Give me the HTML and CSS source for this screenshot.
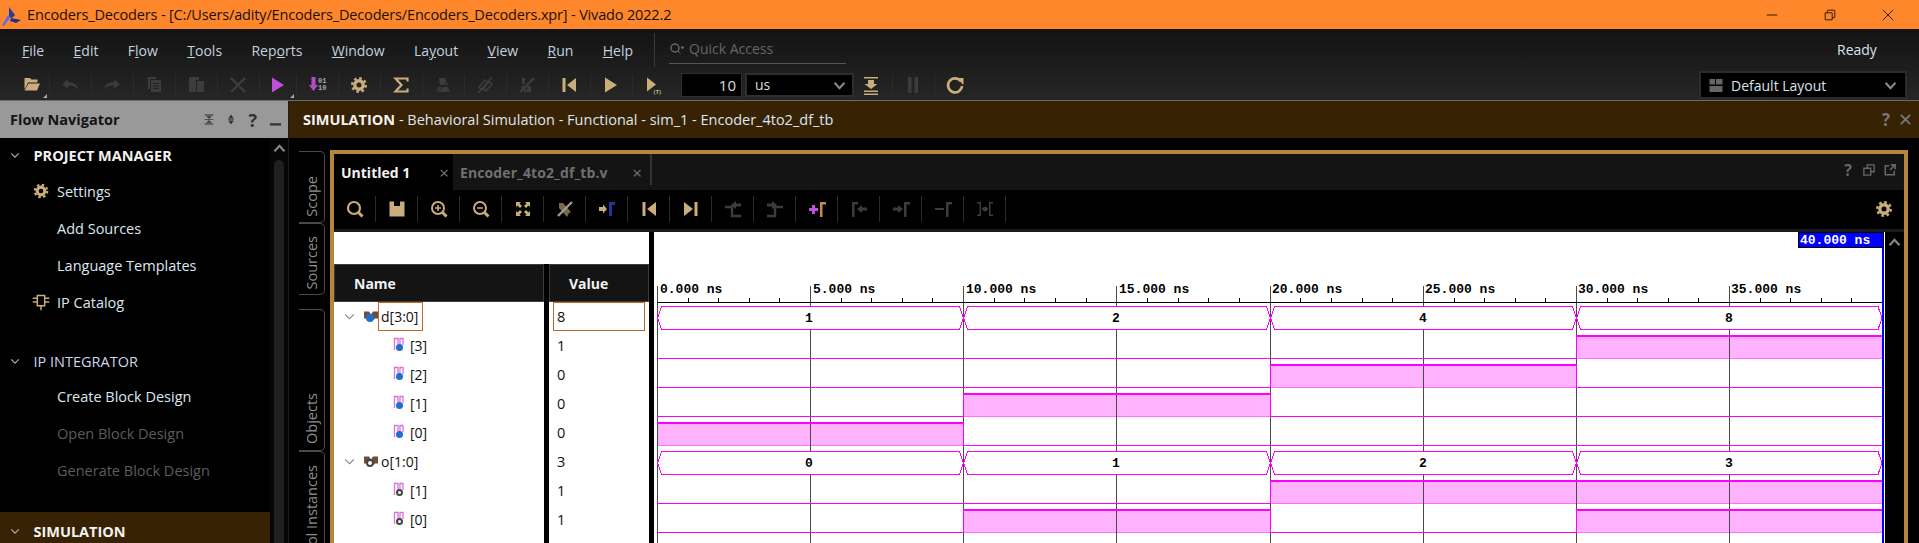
FILE: index.html
```html
<!DOCTYPE html>
<html lang="en">
<head>
    <meta charset="UTF-8">
    <title>Encoders_Decoders - Vivado 2022.2</title>
    <link rel="stylesheet" href="styles.css">
</head>
<body>
    <!-- icon sprite -->
    <svg class="sprite" xmlns="http://www.w3.org/2000/svg">
        <symbol id="i-folder" viewBox="0 0 24 24"><path d="M4.500 5h5.500l1.500 1.500h6V9.500H8L5.500 15 4.500 16z"/><path d="M8.500 10.500H20L17 17.500H4.500z"/></symbol>
        <symbol id="i-undo" viewBox="0 0 24 24"><path d="M4 11.500l6-5v3c5 0 9 1 10 7-2-3-5-4-10-4v3z"/></symbol>
        <symbol id="i-redo" viewBox="0 0 24 24"><path d="M20 11.500l-6-5v3c-5 0-9 1-10 7 2-3 5-4 10-4v3z"/></symbol>
        <symbol id="i-copy" viewBox="0 0 24 24"><path d="M6 4h8v2H8v10H6z"/><path fill-rule="evenodd" d="M9 7h10v12H9zM11 10v1h6v-1zM11 12.500v1h6v-1zM11 15v1h6v-1z"/></symbol>
        <symbol id="i-paste" viewBox="0 0 24 24"><path d="M5 4h10v3h-3v12H5z"/><path d="M13 8h7v11h-7z"/></symbol>
        <symbol id="i-x" viewBox="0 0 24 24"><path d="M5 5l14 14M19 5L5 19" fill="none" stroke="currentColor" stroke-width="2.400"/></symbol>
        <symbol id="i-play" viewBox="0 0 24 24"><path d="M6 4.500l12 7.500-12 7.500z"/></symbol>
        <symbol id="i-run" viewBox="0 0 24 24"><path fill="#b44cc0" d="M6.500 4h4v8h2.500l-4.500 6-4.500-6h2.500z"/><text x="13" y="10" class="bits">01</text><text x="13" y="16.500" class="bits">10</text></symbol>
        <symbol id="i-gear" viewBox="0 0 24 24"><circle cx="12" cy="12" r="4.200" fill="none" stroke="currentColor" stroke-width="3.400"/><circle cx="12" cy="12" r="6.800" fill="none" stroke="currentColor" stroke-width="2.400" stroke-dasharray="2.670 2.670"/></symbol>
        <symbol id="i-sigma" viewBox="0 0 24 24"><path d="M18.500 8.500V5.500H6.500l6 6.500-6 6.500h12v-3" fill="none" stroke="currentColor" stroke-width="2.200"/></symbol>
        <symbol id="i-tri" viewBox="0 0 24 24"><path d="M5.500 19l1.500-5h10l1.500 5zM8 5h6l3 7H9z"/><path d="M6 20L19 5" fill="none" stroke="#222" stroke-width="1"/></symbol>
        <symbol id="i-chain" viewBox="0 0 24 24"><path d="M6 14l6-7 3 3-6 7zM10 15l6-7 3 3-6 7zM5 20L19 4" fill="none" stroke="currentColor" stroke-width="1.600"/></symbol>
        <symbol id="i-slash" viewBox="0 0 24 24"><path d="M7 5h3v6H7zM12 13h4v6h-4z"/><path d="M5 19L19 5M7 13l4 6" fill="none" stroke="currentColor" stroke-width="2.400"/></symbol>
        <symbol id="i-first" viewBox="0 0 24 24"><path d="M5.500 5h3v14h-3zM19 5v14l-9-7z"/></symbol>
        <symbol id="i-last" viewBox="0 0 24 24"><path d="M15.500 5h3v14h-3zM5 5v14l9-7z"/></symbol>
        <symbol id="i-playt" viewBox="0 0 24 24"><path d="M6 4.500l9 7-9 7z"/><text x="12.500" y="21" class="tiny">(T)</text></symbol>
        <symbol id="i-down" viewBox="0 0 24 24"><path d="M5 4h14v1.500H5zM9 7h6v4h3.500L12 16l-6.500-5H9zM5 17.500h14V19H5zM5 20.500h14V22H5z"/></symbol>
        <symbol id="i-pause" viewBox="0 0 24 24"><path d="M7 4h3.500v16H7zM13.500 4H17v16h-3.500z"/></symbol>
        <symbol id="i-redo2" viewBox="0 0 24 24"><path d="M17.500 8a7 7 0 1 0 1.500 5" fill="none" stroke="currentColor" stroke-width="2.600"/><path d="M13.500 5h7v7z"/></symbol>
        <symbol id="i-search" viewBox="0 0 24 24"><circle cx="11" cy="11" r="6" fill="none" stroke="currentColor" stroke-width="2.200"/><path d="M15 15l4.500 4.500" stroke="currentColor" stroke-width="3"/></symbol>
        <symbol id="i-save" viewBox="0 0 24 24"><path fill-rule="evenodd" d="M4.500 4.500h15v15h-15zM9 4.500v4.500h6V4.500z"/></symbol>
        <symbol id="i-zoomin" viewBox="0 0 24 24"><circle cx="11" cy="11" r="6" fill="none" stroke="currentColor" stroke-width="2"/><path d="M15 15l4.500 4.500" stroke="currentColor" stroke-width="3"/><path d="M8 11h6M11 8v6" stroke="currentColor" stroke-width="1.500"/></symbol>
        <symbol id="i-zoomout" viewBox="0 0 24 24"><circle cx="11" cy="11" r="6" fill="none" stroke="currentColor" stroke-width="2"/><path d="M15 15l4.500 4.500" stroke="currentColor" stroke-width="3"/><path d="M8 11h6" stroke="currentColor" stroke-width="1.500"/></symbol>
        <symbol id="i-fit" viewBox="0 0 24 24"><path d="M5 5h5l-1.500 1.500L11 9l-2 2-2.500-2.500L5 10zM19 5v5l-1.500-1.500L15 11l-2-2 2.500-2.500L14 5zM5 19v-5l1.500 1.500L9 13l2 2-2.500 2.500L10 19zM19 19h-5l1.500-1.500L13 15l2-2 2.500 2.500L19 14z"/></symbol>
        <symbol id="i-cut" viewBox="0 0 24 24"><path d="M6 6h4l8 9-2 1-2 4-8-9z" fill="#c9ad7a" opacity=".6"/><path d="M5 19L19 5" stroke="#999" stroke-width="2.400"/></symbol>
        <symbol id="i-marknext" viewBox="0 0 24 24"><path d="M4 10h4V7.500l4 4.500-4 4.500V14H4z"/><path d="M14 19V5h6v3h-3v11z" fill="#20369c"/></symbol>
        <symbol id="i-edgel" viewBox="0 0 24 24"><path d="M4 10h7v9h9" fill="none" stroke="currentColor" stroke-width="2.400"/><path d="M10 8l5-4v2.500h5v3h-5V12z"/></symbol>
        <symbol id="i-edger" viewBox="0 0 24 24"><path d="M4 19h8v-9h8" fill="none" stroke="currentColor" stroke-width="2.400"/><path d="M4 6.500h5V4l5 4-5 4V9.500H4z"/></symbol>
        <symbol id="i-add" viewBox="0 0 24 24"><path d="M4 11h3V8h3v3h3v3h-3v3H7v-3H4z" fill="#c050d8"/><path d="M15 20V5h6v2.500h-3.500V20z" fill="#c98552"/></symbol>
        <symbol id="i-gamma-l" viewBox="0 0 24 24"><path d="M5 20V5h6v2.500H7.500V20z"/><path d="M10 12l5-4v2.500h5v3h-5V16z"/></symbol>
        <symbol id="i-gamma-r" viewBox="0 0 24 24"><path d="M4 10.500h5V8l5 4-5 4v-2.500H4z"/><path d="M15 20V5h6v2.500h-3.500V20z"/></symbol>
        <symbol id="i-gamma-d" viewBox="0 0 24 24"><path d="M4 11h9v2H4z"/><path d="M15 20V5h6v2.500h-3.500V20z"/></symbol>
        <symbol id="i-span" viewBox="0 0 24 24"><path d="M4 5h4v14H4v-1.500h2.500v-11H4zM20 5h-4v14h4v-1.500h-2.500v-11H20z"/><path d="M9 12h6M9 12l2.500-2v4zM15 12l-2.500-2v4z" stroke="currentColor"/></symbol>
        <symbol id="i-bus" viewBox="0 0 14 16"><path fill="#6e4c3c" d="M0 3.500h5l2 3 2-3h5v7h-3l-1 1H4l-1-1H0z"/></symbol>
        <symbol id="i-bit" viewBox="0 0 14 16"><path d="M1.500 13V1.500H5V11M7 11V1.500h3V8" fill="none" stroke="#d873d8" stroke-width="1.300"/></symbol>
    </svg>

    <div class="app">
        <div class="titlebar">
            <svg class="logo" viewBox="0 0 24 24"><path fill="#2d3a9c" d="M9 4l6 8-3 3-3-1z"/><path fill="#6a6ae0" d="M8 12l2 3-6 8-2-1z"/><path fill="#23308c" d="M11 15l10 2-5 3-6-2z"/></svg>
            <span class="title">Encoders_Decoders - [C:/Users/adity/Encoders_Decoders/Encoders_Decoders.xpr] - Vivado 2022.2</span>
            <div class="winbtns">
                <svg viewBox="0 0 16 16"><path d="M2 8h12" stroke="#1a1008" fill="none"/></svg>
                <svg viewBox="0 0 16 16"><path d="M2.500 5.500h8v8h-8zM5 5.500V3a.5.500 0 0 1 .5-.5h7.500a.5.500 0 0 1 .5.500v7.500a.5.500 0 0 1-.5.500h-2.500" stroke="#1a1008" fill="none"/></svg>
                <svg viewBox="0 0 16 16"><path d="M2 2l12 12M14 2L2 14" stroke="#1a1008" fill="none"/></svg>
            </div>
        </div>

        <div class="topbar">
            <div class="menus">
                <nav class="menu">
                    <a><u>F</u>ile</a><a><u>E</u>dit</a><a>F<u>l</u>ow</a><a><u>T</u>ools</a><a>Rep<u>o</u>rts</a><a><u>W</u>indow</a><a>La<u>y</u>out</a><a><u>V</u>iew</a><a><u>R</u>un</a><a><u>H</u>elp</a>
                </nav>
                <div class="quick">
                    <svg class="q-icon" viewBox="0 0 16 16"><circle cx="6" cy="7" r="4" fill="none" stroke="#666" stroke-width="1.500"/><path d="M9 10l2.500 2.500M12 6h3l-1.500 2z" stroke="#666" fill="#666"/></svg>
                    <span>Quick Access</span>
                </div>
                <span class="ready">Ready</span>
            </div>
            <div class="tools">
                <span class="tb tb-first on corner"><svg><use href="#i-folder"/></svg></span>
                <span class="tb off"><svg><use href="#i-undo"/></svg></span>
                <span class="tb off"><svg><use href="#i-redo"/></svg></span>
                <span class="tb off"><svg><use href="#i-copy"/></svg></span>
                <span class="tb off"><svg><use href="#i-paste"/></svg></span>
                <span class="tb off"><svg><use href="#i-x"/></svg></span>
                <span class="tb tb-run purple corner"><svg><use href="#i-play"/></svg></span>
                <span class="tb bits-on"><svg><use href="#i-run"/></svg></span>
                <span class="tb on"><svg><use href="#i-gear"/></svg></span>
                <span class="tb on"><svg><use href="#i-sigma"/></svg></span>
                <span class="tb off"><svg><use href="#i-tri"/></svg></span>
                <span class="tb off"><svg><use href="#i-chain"/></svg></span>
                <span class="tb off"><svg><use href="#i-slash"/></svg></span>
                <span class="tb on"><svg><use href="#i-first"/></svg></span>
                <span class="tb on"><svg><use href="#i-play"/></svg></span>
                <span class="tb on"><svg><use href="#i-playt"/></svg></span>
                <span class="run-input">10</span>
                <span class="run-unit">us<svg class="chev" viewBox="0 0 14 10"><path d="M1.500 2L7 8l5.500-6" fill="none" stroke="#888" stroke-width="2.400"/></svg></span>
                <span class="tb tb-narrow on"><svg><use href="#i-down"/></svg></span>
                <span class="tb off"><svg><use href="#i-pause"/></svg></span>
                <span class="tb on"><svg><use href="#i-redo2"/></svg></span>
                <span class="layout-pick">
                    <svg class="lay-icon" viewBox="0 0 14 14"><path fill="#666" d="M0 0h6v6H0zM7 0h7v6H7zM0 7.500h14V14H0z"/></svg>
                    <span>Default Layout</span>
                    <svg class="chev" viewBox="0 0 14 10"><path d="M1.500 2L7 8l5.500-6" fill="none" stroke="#888" stroke-width="2.400"/></svg>
                </span>
            </div>
        </div>

        <div class="main">
            <aside class="flow">
                <div class="flow-head">
                    <strong>Flow Navigator</strong>
                    <div class="flow-btns">
                        <svg viewBox="0 0 14 14"><path fill="#333" d="M1 0h12v1.500H1zM1 12.500h12V14H1zM7 6L3 2.500h8zM7 8l4 3.500H3z"/><path d="M1 6.500h12v1H1z" fill="#333"/></svg>
                        <svg viewBox="0 0 14 14"><path fill="#333" d="M7 0l4 5.500H3zM7 14l-4-5.500h8z"/><path d="M3 6.500h8v1H3z" fill="#333"/></svg>
                        <b>?</b>
                        <svg viewBox="0 0 14 14"><path fill="#333" d="M1 11h12v2.500H1z"/></svg>
                    </div>
                </div>
                <div class="flow-body">
                    <div class="flow-list">
                        <div class="sec"><svg class="twist" viewBox="0 0 12 8"><path d="M1.500 1.500L6 6l4.500-4.500" fill="none" stroke="#aaa" stroke-width="1.500"/></svg><b>PROJECT MANAGER</b></div>
                        <div class="item"><svg class="item-ic on"><use href="#i-gear"/></svg>Settings</div>
                        <div class="item">Add Sources</div>
                        <div class="item">Language Templates</div>
                        <div class="item"><svg class="item-ic on" viewBox="0 0 24 24"><path d="M8 5h8v11H8zM12 16v5M3 8h5M3 12h5M16 8h5M16 12h5" fill="none" stroke="currentColor" stroke-width="1.600"/></svg>IP Catalog</div>
                        <div class="sec sec-gap"><svg class="twist" viewBox="0 0 12 8"><path d="M1.500 1.500L6 6l4.500-4.500" fill="none" stroke="#aaa" stroke-width="1.500"/></svg>IP INTEGRATOR</div>
                        <div class="item">Create Block Design</div>
                        <div class="item dim">Open Block Design</div>
                        <div class="item dim">Generate Block Design</div>
                        <div class="sec sec-sim"><svg class="twist" viewBox="0 0 12 8"><path d="M1.500 1.500L6 6l4.500-4.500" fill="none" stroke="#aaa" stroke-width="1.500"/></svg><b>SIMULATION</b></div>
                    </div>
                    <div class="flow-scroll">
                        <svg class="up" viewBox="0 0 14 10"><path d="M1.500 8L7 2l5.500 6" fill="none" stroke="#888" stroke-width="2.400"/></svg>
                        <div class="thumb"></div>
                    </div>
                </div>
            </aside>

            <section class="sim">
                <div class="sim-head">
                    <span><b>SIMULATION</b> - Behavioral Simulation - Functional - sim_1 - Encoder_4to2_df_tb</span>
                    <div class="sim-btns"><b>?</b><svg viewBox="0 0 14 14"><path d="M2 2l10 10M12 2L2 12" stroke="#777" stroke-width="2" fill="none"/></svg></div>
                </div>
                <div class="sim-body">
                    <div class="side-tabs">
                        <div class="vtab vtab-scope"><span>Scope</span></div>
                        <div class="vtab vtab-sources"><span>Sources</span></div>
                        <div class="vtab vtab-objects"><span>Objects</span></div>
                        <div class="vtab vtab-inst"><span>Tool Instances</span></div>
                    </div>
                    <div class="panel">
                        <div class="tabbar">
                            <div class="tab active">Untitled 1<i>×</i></div>
                            <div class="tab">Encoder_4to2_df_tb.v<i>×</i></div>
                            <div class="tab-end"></div>
                            <div class="tab-btns">
                                <b>?</b>
                                <svg viewBox="0 0 14 14"><path d="M1 5h8v8H1zM5 5V1h8v8H9" fill="none" stroke="#666" stroke-width="1.600"/></svg>
                                <svg viewBox="0 0 14 14"><path d="M6 2H1.500v10.500H12V8M8 1h5v5M13 1L7 7" fill="none" stroke="#666" stroke-width="1.800"/></svg>
                            </div>
                        </div>
                        <div class="wavebar">
                            <span class="wb on"><svg><use href="#i-search"/></svg></span>
                            <span class="wb on"><svg><use href="#i-save"/></svg></span>
                            <span class="wb on"><svg><use href="#i-zoomin"/></svg></span>
                            <span class="wb on"><svg><use href="#i-zoomout"/></svg></span>
                            <span class="wb on"><svg><use href="#i-fit"/></svg></span>
                            <span class="wb"><svg><use href="#i-cut"/></svg></span>
                            <span class="wb on"><svg><use href="#i-marknext"/></svg></span>
                            <span class="wb on"><svg><use href="#i-first"/></svg></span>
                            <span class="wb on"><svg><use href="#i-last"/></svg></span>
                            <span class="wb off"><svg><use href="#i-edgel"/></svg></span>
                            <span class="wb off"><svg><use href="#i-edger"/></svg></span>
                            <span class="wb"><svg><use href="#i-add"/></svg></span>
                            <span class="wb off"><svg><use href="#i-gamma-l"/></svg></span>
                            <span class="wb off"><svg><use href="#i-gamma-r"/></svg></span>
                            <span class="wb off"><svg><use href="#i-gamma-d"/></svg></span>
                            <span class="wb off"><svg><use href="#i-span"/></svg></span>
                            <span class="wb-gear on"><svg><use href="#i-gear"/></svg></span>
                        </div>
                        <div class="wave-cfg">
                            <div class="signals">
                                <div class="sig-blank"></div>
                                <div class="sig-cols">
                                    <div class="col-name">
                                        <div class="col-head">Name</div>
                                        <div class="row"><svg class="twist" viewBox="0 0 12 8"><path d="M1 1.500L6 6.500l5-5" fill="none" stroke="#888" stroke-width="1.300"/></svg><span class="ic-wrap"><svg class="sig-ic"><use href="#i-bus"/></svg><em class="dot blue"></em></span><span class="sel">d[3:0]</span></div>
                                        <div class="row child"><span class="ic-wrap"><svg class="sig-ic"><use href="#i-bit"/></svg><em class="dot blue small"></em></span>[3]</div>
                                        <div class="row child"><span class="ic-wrap"><svg class="sig-ic"><use href="#i-bit"/></svg><em class="dot blue small"></em></span>[2]</div>
                                        <div class="row child"><span class="ic-wrap"><svg class="sig-ic"><use href="#i-bit"/></svg><em class="dot blue small"></em></span>[1]</div>
                                        <div class="row child"><span class="ic-wrap"><svg class="sig-ic"><use href="#i-bit"/></svg><em class="dot blue small"></em></span>[0]</div>
                                        <div class="row"><svg class="twist" viewBox="0 0 12 8"><path d="M1 1.500L6 6.500l5-5" fill="none" stroke="#888" stroke-width="1.300"/></svg><span class="ic-wrap"><svg class="sig-ic"><use href="#i-bus"/></svg><em class="dot grey"></em></span>o[1:0]</div>
                                        <div class="row child"><span class="ic-wrap"><svg class="sig-ic"><use href="#i-bit"/></svg><em class="dot grey small"></em></span>[1]</div>
                                        <div class="row child"><span class="ic-wrap"><svg class="sig-ic"><use href="#i-bit"/></svg><em class="dot grey small"></em></span>[0]</div>
                                    </div>
                                    <div class="col-val">
                                        <div class="col-head">Value</div>
                                        <div class="row"><span class="val-sel">8</span></div>
                                        <div class="row">1</div>
                                        <div class="row">0</div>
                                        <div class="row">0</div>
                                        <div class="row">0</div>
                                        <div class="row">3</div>
                                        <div class="row">1</div>
                                        <div class="row">1</div>
                                    </div>
                                </div>
                            </div>

                            <svg class="plot" viewBox="654 232 1231 311" shape-rendering="crispEdges">
                                <!-- high levels -->
                                <path class="hi" d="M1576 335h306v23h-306zM1270 364h306v23h-306zM963 393h307v23H963zM657 422h306v23H657zM1270 480h612v23h-612zM963 509h307v23H963zM1576 509h306v23h-306z"/>
                                <path class="hi-foot" d="M1576 358.500h306M1270 387.500h306M963 416.500h307M657 445.500h306M1270 503.500h612M963 532.500h307M1576 532.500h306"/>
                                <!-- time grid -->
                                <path class="grid" d="M657.500 286V543M810.500 286V543M963.500 286V543M1116.500 286V543M1270.500 286V543M1423.500 286V543M1576.500 286V543M1729.500 286V543"/>
                                <path class="axis" d="M657 302.500H1882M688.500 298v4M718.500 298v4M749.500 298v4M779.500 298v4M841.500 298v4M871.500 298v4M902.500 298v4M932.500 298v4M994.500 298v4M1024.500 298v4M1055.500 298v4M1086.500 298v4M1147.500 298v4M1178.500 298v4M1208.500 298v4M1239.500 298v4M1300.500 298v4M1331.500 298v4M1362.500 298v4M1392.500 298v4M1454.500 298v4M1484.500 298v4M1515.500 298v4M1545.500 298v4M1607.500 298v4M1637.500 298v4M1668.500 298v4M1698.500 298v4M1760.500 298v4M1790.500 298v4M1821.500 298v4M1851.500 298v4"/>
                                <g class="ruler">
                                    <text x="660" y="293">0.000 ns</text>
                                    <text x="813" y="293">5.000 ns</text>
                                    <text x="966" y="293">10.000 ns</text>
                                    <text x="1119" y="293">15.000 ns</text>
                                    <text x="1272" y="293">20.000 ns</text>
                                    <text x="1425" y="293">25.000 ns</text>
                                    <text x="1578" y="293">30.000 ns</text>
                                    <text x="1731" y="293">35.000 ns</text>
                                </g>
                                <!-- scalar traces -->
                                <path class="trace" d="M657 358.500H1576.500V335.500H1882"/>
                                <path class="trace" d="M657 387.500H1270.500V364.500H1576.500V387.500H1882"/>
                                <path class="trace" d="M657 416.500H963.500V393.500H1270.500V416.500H1882"/>
                                <path class="trace" d="M657 422.500H963.500V445.500H1882"/>
                                <path class="trace" d="M657 503.500H1270.500V480.500H1882"/>
                                <path class="trace" d="M657 532.500H963.500V509.500H1270.500V532.500H1576.500V509.500H1882"/>
                                <path class="trace-top" d="M1576 336h306M1270 365h306M963 394h307M657 423h306M1270 481h612M963 510h307M1576 510h306"/>
                                <!-- buses -->
                                <path class="bus" d="M657.500 318L661.500 306.500H959.500L963.500 318L959.500 329.500H661.500Z"/>
                                <path class="bus" d="M963.500 318L967.500 306.500H1266.500L1270.500 318L1266.500 329.500H967.500Z"/>
                                <path class="bus" d="M1270.500 318L1274.500 306.500H1572.500L1576.500 318L1572.500 329.500H1274.500Z"/>
                                <path class="bus" d="M1576.500 318L1580.500 306.500H1878L1882 318L1878 329.500H1580.500Z"/>
                                <path class="bus" d="M657.500 463L661.500 451.500H959.500L963.500 463L959.500 474.500H661.500Z"/>
                                <path class="bus" d="M963.500 463L967.500 451.500H1266.500L1270.500 463L1266.500 474.500H967.500Z"/>
                                <path class="bus" d="M1270.500 463L1274.500 451.500H1572.500L1576.500 463L1572.500 474.500H1274.500Z"/>
                                <path class="bus" d="M1576.500 463L1580.500 451.500H1878L1882 463L1878 474.500H1580.500Z"/>
                                <g class="bus-val">
                                    <text x="809" y="322">1</text><text x="1116" y="322">2</text><text x="1423" y="322">4</text><text x="1729" y="322">8</text>
                                    <text x="809" y="467">0</text><text x="1116" y="467">1</text><text x="1423" y="467">2</text><text x="1729" y="467">3</text>
                                </g>
                                <!-- cursor -->
                                <rect class="cursor" x="1882" y="232" width="2" height="311"/>
                                <rect class="cursor-tag" x="1798.500" y="232.500" width="85" height="15"/>
                                <text class="cursor-text" x="1800" y="244">40.000 ns</text>
                            </svg>
                            <div class="wave-scroll"><svg class="up" viewBox="0 0 14 10"><path d="M1.500 8L7 2l5.500 6" fill="none" stroke="#888" stroke-width="2.400"/></svg></div>
                        </div>
                    </div>
                </div>
            </section>
        </div>
    </div>
</body>
</html>
```

FILE: styles.css
```css
* { box-sizing: border-box; }
html, body { margin: 0; height: 100%; background: #000; overflow: hidden; }
body { font-family: "Open Sans", "Noto Sans", sans-serif; font-size: 14px; color: #e8e8e8; }
.sprite { position: absolute; width: 0; height: 0; }
.tiny { font-size: 6px; font-weight: 700; font-family: "Open Sans", sans-serif; }
.bits { font-size: 7px; font-weight: 700; font-family: "Liberation Mono", monospace; fill: #a8a8a8; }
.app { width: 1919px; height: 543px; display: flex; flex-direction: column; }

.on { color: #c9ad7a; fill: #c9ad7a; }
.off { color: #3c3c3c; fill: #3c3c3c; }
.purple { color: #c050d8; fill: #c050d8; }

/* title bar */
.titlebar { height: 29px; background: #ff872b; display: flex; align-items: center; color: #1a1008; flex: none; }
.logo { width: 24px; height: 24px; margin-right: 3px; flex: none; }
.title { font-size: 14.500px; letter-spacing: -0.160px; white-space: nowrap; }
.winbtns { margin-left: auto; display: flex; gap: 44px; padding-right: 24px; }
.winbtns svg { width: 14px; height: 14px; }

/* menu + main toolbar */
.topbar { height: 72px; background: linear-gradient(#131313, #262626); border-bottom: 1px solid #6a6a6a; flex: none; }
.menus { height: 42px; display: flex; align-items: center; padding-left: 22px; }
.menu { display: flex; gap: 29.400px; width: 632px; flex: none; margin-top: 1px; }
.menu a { color: #c4d0dc; font-size: 14px; }
.quick { height: 34px; width: 192px; border-left: 1px solid #3a3a3a; padding: 0 0 3px 14px; position: relative; display: flex; align-items: center; gap: 4px; color: #666; font-size: 14px; flex: none; }
.quick::after { content: ""; position: absolute; left: 14px; right: 0; bottom: 3px; height: 1px; background: #555; }
.q-icon { width: 16px; height: 16px; }
.ready { margin-left: 991px; margin-bottom: 2px; color: #d8e2ec; font-size: 14px; }
.tools { height: 29px; display: flex; align-items: center; padding: 0 0 1px 14px; }
.tb { width: 42px; height: 28px; display: flex; align-items: center; justify-content: center; position: relative; flex: none; }
.tb svg { width: 24px; height: 24px; }
.tb-first { width: 35px; }
.tb-run { width: 37px; }
.bits-on { fill: #c9ad7a; }
.tb + .tb::before { content: ""; position: absolute; left: 0; top: 3px; bottom: 3px; width: 1px; background: #2b2b2b; }
.corner::after { content: ""; position: absolute; right: 2px; bottom: 1px; border: 2.500px solid transparent; border-right-color: #aaa; border-bottom-color: #aaa; }
.run-input { width: 61px; height: 24px; margin-left: 7px; background: #000; border: 1px solid #2e2e2e; color: #ddd; text-align: right; padding-right: 5px; line-height: 23px; font-size: 15px; }
.run-unit { width: 109px; height: 24px; margin-left: 3px; background: #000; border: 2px solid #2e2e2e; color: #ddd; padding-left: 8px; line-height: 20px; font-size: 14px; display: flex; align-items: center; justify-content: space-between; padding-right: 6px; }
.chev { width: 13px; height: 9px; flex: none; }
.tb-narrow { width: 34px; margin-right: 4px; }
.layout-pick { margin-left: auto; margin-right: 12px; width: 208px; height: 28px; background: #000; border: 2px solid #2b2b2b; display: flex; align-items: center; padding: 0 8px; font-size: 14px; color: #d8e2ec; }
.lay-icon { width: 14px; height: 13px; margin-right: 8px; flex: none; }
.layout-pick .chev { margin-left: auto; }

.main { flex: 1; display: flex; min-height: 0; }

/* flow navigator */
.flow { width: 288px; flex: none; display: flex; flex-direction: column; }
.flow-head { height: 37px; background: #999; display: flex; align-items: center; justify-content: space-between; padding: 0 6px 0 10px; color: #141414; font-size: 14.500px; flex: none; }
.flow-btns { display: flex; align-items: center; gap: 12px; }
.flow-btns svg { width: 10px; height: 13px; }
.flow-btns b { font-size: 18px; color: #333; }
.flow-btns svg:last-child { width: 13px; }
.flow-body { flex: 1; display: flex; min-height: 0; }
.flow-list { width: 270px; flex: none; }
.sec { height: 35px; display: flex; align-items: center; color: #c8d8ea; font-size: 14.500px; padding-left: 10px; }
.sec b { color: #f2f2f2; }
.twist { width: 10px; height: 7px; margin-right: 13.500px; flex: none; }
.sec-gap { margin-top: 23px; height: 34px; }
.sec-sim { margin-top: 23px; height: 32px; background: #382204; padding-top: 6px; }
.item { height: 37px; display: flex; align-items: center; padding-left: 57px; position: relative; font-size: 14.500px; color: #dce6f0; }
.item.dim { color: #5c5c5c; }
.item-ic { position: absolute; left: 30px; top: 7px; width: 22px; height: 22px; }
.flow-scroll { width: 18px; background: #060606; display: flex; flex-direction: column; align-items: center; padding-top: 6px; }
.up { width: 13px; height: 9px; flex: none; }
.thumb { width: 10px; flex: 1; margin-top: 7px; background: #202020; border-radius: 5px 5px 0 0; }

/* simulation dashboard */
.sim { flex: 1; display: flex; flex-direction: column; min-width: 0; border-left: 1px solid #1c1c1c; }
.sim-head { height: 37px; background: #382204; display: flex; align-items: center; justify-content: space-between; padding: 0 7px 0 14px; color: #dce6f0; font-size: 14.500px; flex: none; }
.sim-head b { color: #f2f2f2; }
.sim-btns { display: flex; align-items: center; gap: 9px; }
.sim-btns b { color: #777; font-size: 17px; }
.sim-btns svg { width: 13px; height: 13px; }
.sim-body { flex: 1; display: flex; min-height: 0; padding: 12px 11px 0 10px; }

.side-tabs { width: 31px; flex: none; display: flex; flex-direction: column; margin-top: 1px; overflow: hidden; }
.vtab { width: 26px; border: 1px solid #4a4a4a; border-left: 0; border-radius: 0 5px 5px 0; display: flex; flex: none; justify-content: center; color: #8b8f92; overflow: hidden; }
.vtab span { writing-mode: vertical-rl; transform: rotate(180deg); font-size: 14.500px; white-space: nowrap; line-height: 24px; }
.vtab-scope { height: 72px; align-items: flex-end; padding-bottom: 5px; }
.vtab-sources { height: 72px; align-items: flex-end; padding-bottom: 5px; }
.vtab-objects { height: 142px; margin-top: 14px; align-items: flex-end; padding-bottom: 6px; }
.vtab-inst { height: 120px; align-items: flex-start; padding-top: 13px; }

.panel { flex: 1; border: 4px solid #b5853a; border-bottom: 0; display: flex; flex-direction: column; min-width: 0; background: #000; }
.tabbar { height: 36px; background: #141414; display: flex; flex: none; }
.tab { width: 197px; height: 36px; display: flex; align-items: center; padding-left: 7px; position: relative; font-weight: 700; font-size: 14px; letter-spacing: 0.100px; color: #707070; }
.tab.active { width: 119px; background: #000; color: #f2f2f2; letter-spacing: 0; }
.tab i { position: absolute; right: 8px; top: 7px; font-style: normal; font-weight: 400; font-size: 17px; color: #777; }
.tab.active i { right: 4px; }
.tab-end { width: 2px; height: 31px; background: #333; }
.tab-btns { margin-left: auto; display: flex; align-items: center; gap: 9px; padding: 0 8px 4px 0; color: #666; }
.tab-btns b { font-size: 16px; margin-right: 2px; }
.tab-btns svg { width: 12px; height: 12px; }

.wavebar { height: 39px; display: flex; align-items: center; padding-bottom: 1px; flex: none; }
.wb { width: 42px; height: 26px; display: flex; align-items: center; justify-content: center; border-right: 1px solid #2c2c2c; flex: none; }
.wb svg, .wb-gear svg { width: 24px; height: 24px; }
.wb-gear { margin-left: auto; padding-right: 8px; display: flex; }

.wave-cfg { flex: 1; display: flex; min-height: 0; border-top: 3px solid #1a1a1a; }
.signals { width: 315px; flex: none; display: flex; flex-direction: column; }
.sig-blank { height: 32px; background: #fff; flex: none; }
.sig-cols { flex: 1; display: flex; gap: 5px; min-height: 0; }
.col-name { width: 210px; background: #fff; flex: none; }
.col-val { width: 100px; background: #fff; flex: none; }
.col-head { height: 38px; background: #141414; border: 1px solid #3c3c3c; color: #f2f2f2; font-weight: 700; font-size: 14px; display: flex; align-items: center; padding-left: 19px; }
.row { height: 29px; display: flex; align-items: center; color: #111; font-size: 14px; white-space: nowrap; }
.col-val .row { padding-left: 8px; font-size: 14.500px; }
.col-name .row { padding-left: 10px; }
.col-name .row.child { padding-left: 59px; }
.col-name .twist { margin-right: 9px; width: 11px; }
.ic-wrap { width: 14px; height: 18px; position: relative; display: block; margin-right: 3px; flex: none; }
.sig-ic { width: 14px; height: 16px; display: block; }
.dot { position: absolute; left: 2px; top: 6px; width: 8px; height: 8px; border-radius: 50%; }
.dot.small { left: 3px; top: 7px; width: 7px; height: 7px; }
.dot.blue { background: #1f6fd0; }
.dot.grey { background: #fff; border: 2px solid #444; }
.sel { border: 1px solid #c0682a; height: 29px; line-height: 27px; padding: 0 4px 0 2px; margin-left: -3px; }
.val-sel { border: 1px solid #c0682a; width: 92px; height: 29px; line-height: 27px; padding-left: 3px; margin-left: -4px; }

/* waveform canvas */
.plot { width: 1231px; height: 311px; margin-left: 5px; background: #fff; flex: none; display: block; }
.hi { fill: #ffb3ff; }
.hi-foot { fill: none; stroke: #ff70ff; }
.grid { fill: none; stroke: #4a4a4a; }
.axis { fill: none; stroke: #000; }
.ruler text, .bus-val text, .cursor-text { font-family: "Liberation Mono", monospace; font-weight: 700; font-size: 13px; }
.ruler text { fill: #000; }
.trace { fill: none; stroke: #ff00ff; }
.trace-top { fill: none; stroke: #ff00ff; stroke-width: 2; }
.bus { fill: #fff; stroke: #ff00ff; }
.bus-val text { fill: #000; text-anchor: middle; }
.cursor { fill: #0000ff; }
.cursor-tag { fill: #0000ff; stroke: #000; }
.cursor-text { fill: #fff; }
.wave-scroll { width: 19px; flex: none; background: #000; display: flex; justify-content: center; padding-top: 6px; }
```
